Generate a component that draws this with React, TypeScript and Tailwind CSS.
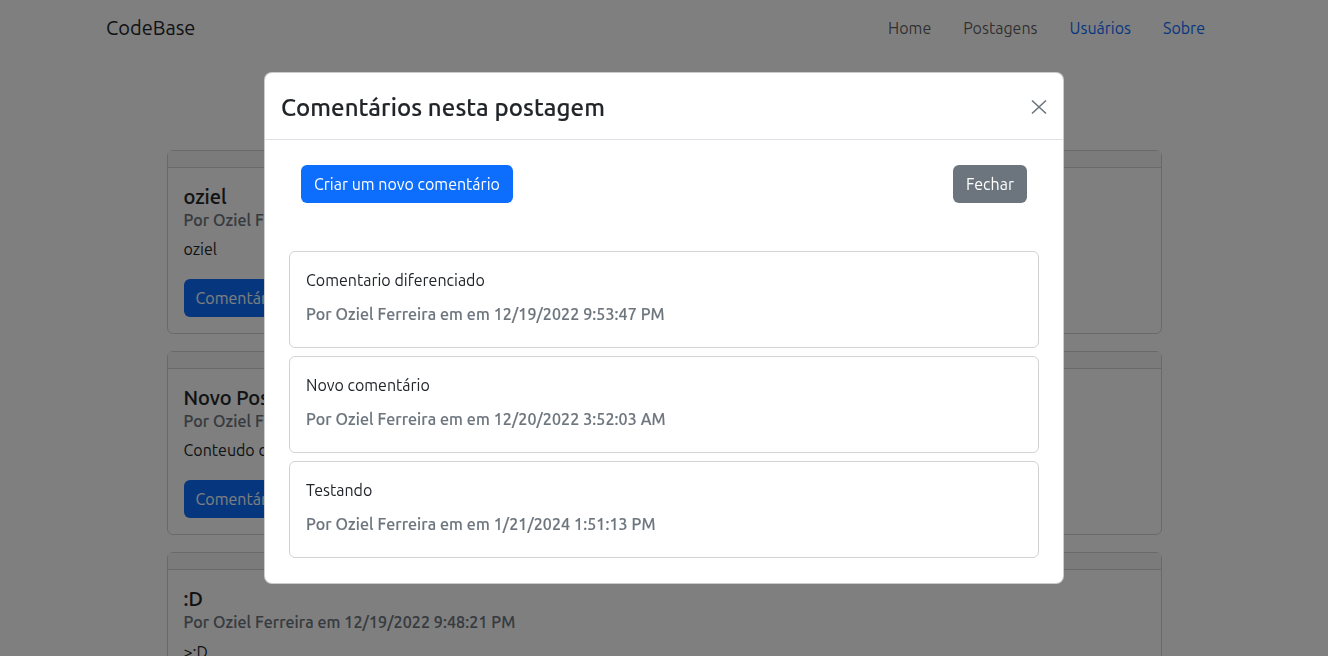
const posts = [
  { title: 'oziel', meta: 'Por Oziel Ferreira em 12/19/2022 9:40:12 PM', text: 'oziel' },
  { title: 'Novo Post', meta: 'Por Oziel Ferreira em 12/19/2022 9:45:30 PM', text: 'Conteudo do novo post' },
  { title: ':D', meta: 'Por Oziel Ferreira em 12/19/2022 9:48:21 PM', text: '>:D' },
];

const comments = [
  { text: 'Comentario diferenciado', meta: 'Por Oziel Ferreira em em 12/19/2022 9:53:47 PM' },
  { text: 'Novo comentário', meta: 'Por Oziel Ferreira em em 12/20/2022 3:52:03 AM' },
  { text: 'Testando', meta: 'Por Oziel Ferreira em em 1/21/2024 1:51:13 PM' },
];

function PostCard({ post }: { post: (typeof posts)[number] }) {
  return (
    <div className="mb-[17px] rounded-md border border-[#d3d3d4] bg-white">
      <div className="h-[17px] border-b border-[#d3d3d4] bg-[#f7f7f7]" />
      <div className="px-4 pb-4 pt-[17px]">
        <div className="text-[20px] font-medium leading-[1.2] text-[#212529] [-webkit-text-stroke:0.15px_#212529]">
          {post.title}
        </div>
        <div className="mt-[2px] text-base font-medium leading-[1.2] tracking-[0.1px] text-[#6c757d] [-webkit-text-stroke:0.15px_#6c757d]">
          {post.meta}
        </div>
        <div className="mt-[7px] text-base leading-6 text-[#212529]">{post.text}</div>
        <button className="mt-[18px] block h-[38px] rounded-md bg-[#0d6efd] px-3 text-base text-white">
          Comentários
        </button>
      </div>
    </div>
  );
}

function CloseIcon() {
  return (
    <svg width="16" height="16" viewBox="0 0 16 16" className="text-[#6c757d]">
      <path d="M1 1.5L15 14.5M15 1.5L1 14.5" stroke="currentColor" strokeWidth="1.6" fill="none" />
    </svg>
  );
}

export default function App() {
  return (
    <div className="relative h-[656px] overflow-hidden bg-white font-['Ubuntu','Noto_Sans',sans-serif] text-[#212529]">
      <nav className="h-14 bg-white">
        <div className="mx-auto flex h-full w-[1140px] items-center justify-between px-3">
          <span className="text-[20px]">CodeBase</span>
          <div className="flex items-center text-base">
            <a className="px-4 text-[rgba(0,0,0,0.65)]">Home</a>
            <a className="px-4 text-[rgba(0,0,0,0.65)]">Postagens</a>
            <a className="px-4 text-[#0d6efd]">Usuários</a>
            <a className="pl-4 pr-[17px] text-[#0d6efd]">Sobre</a>
          </div>
        </div>
      </nav>

      <main className="mx-auto mt-[94px] w-[995px]">
        {posts.map((p) => (
          <PostCard key={p.title} post={p} />
        ))}
      </main>

      <div className="fixed inset-0 flex items-center justify-center bg-black/50">
        <div className="w-[800px] rounded-lg border border-black/20 bg-white">
          <div className="flex h-[67px] items-center justify-between border-b border-[#dee2e6] px-4">
            <h4 className="pt-[5px] text-[24px] font-medium leading-[1.2] tracking-[0.1px] text-[#212529] [-webkit-text-stroke:0.15px_#212529]">
              Comentários nesta postagem
            </h4>
            <button className="mt-[2px] flex h-4 w-4 items-center justify-center">
              <CloseIcon />
            </button>
          </div>
          <div className="px-4 pb-4 pt-[25px]">
            <div className="flex items-center justify-between px-5">
              <button className="h-[38px] rounded-md bg-[#0d6efd] px-[13px] text-base text-white">
                Criar um novo comentário
              </button>
              <button className="h-[38px] rounded-md bg-[#6c757d] px-[13px] text-base text-white">
                Fechar
              </button>
            </div>
            <div className="mx-2 mb-[9px] mt-12 flex flex-col gap-2">
              {comments.map((c) => (
                <div key={c.text} className="h-[97px] rounded-md border border-[#d3d3d4] px-4 pt-4">
                  <div className="text-base leading-6 text-[#212529]">{c.text}</div>
                  <div className="mt-[10px] text-base font-medium leading-6 tracking-[0.1px] text-[#6c757d] [-webkit-text-stroke:0.15px_#6c757d]">
                    {c.meta}
                  </div>
                </div>
              ))}
            </div>
          </div>
        </div>
      </div>
    </div>
  );
}
